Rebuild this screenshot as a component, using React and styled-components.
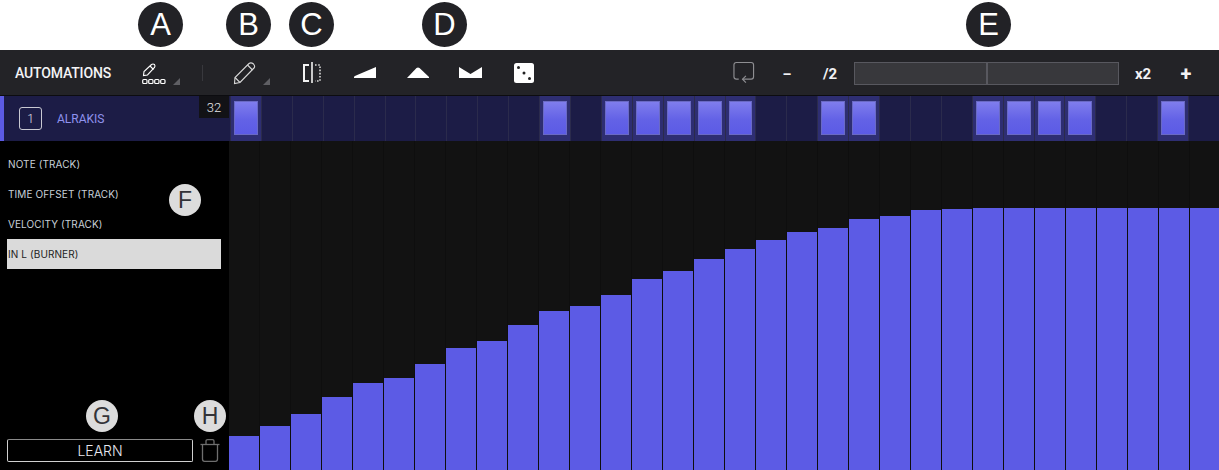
import styled, { createGlobalStyle } from 'styled-components';

const Global = createGlobalStyle`
  html, body { margin: 0; padding: 0; background: #000; }
  body { font-family: "Roboto", "Liberation Sans", sans-serif; overflow: hidden; }
`;

const LEVELS = [436, 426, 414, 397, 383, 378, 364, 348, 341, 325, 311, 306, 295, 279, 271, 259, 249, 240, 232, 228, 219, 216, 210, 209, 208, 208, 208, 208, 208, 208, 208, 208];
const ACTIVE = [0, 10, 12, 13, 14, 15, 16, 19, 20, 24, 25, 26, 27, 30];
const PARAMS = ['NOTE (TRACK)', 'TIME OFFSET (TRACK)', 'VELOCITY (TRACK)', 'IN L (BURNER)'];

const Page = styled.div`
  position: relative;
  width: 1219px;
  height: 470px;
  overflow: hidden;
  background: #000;
`;

const TopStrip = styled.div`
  height: 50px;
  background: #fff;
`;

const Badge = styled.div`
  position: absolute;
  left: ${p => p.$x}px;
  top: ${p => p.$y}px;
  width: ${p => p.$size}px;
  height: ${p => p.$size}px;
  border-radius: 50%;
  display: flex;
  align-items: center;
  justify-content: center;
  font-family: "Liberation Sans", sans-serif;
  font-size: ${p => p.$font}px;
  background: ${p => (p.$light ? '#dcdcdc' : '#222226')};
  color: ${p => (p.$light ? '#333338' : '#fff')};
`;

const Toolbar = styled.div`
  height: 45px;
  background: #232327;
  border-bottom: 1px solid #0c0c10;
  display: flex;
  align-items: center;
  color: #fff;
`;

const Title = styled.div`
  flex: none;
  width: 127px;
  padding-left: 15px;
  font-size: 14px;
  font-weight: 500;
  letter-spacing: -0.15px;
  color: #f4f4f6;
`;

const Tool = styled.div`
  flex: none;
  display: flex;
  align-items: ${p => (p.$center ? 'center' : 'flex-start')};
  margin-left: ${p => p.$gap || 0}px;
  width: ${p => p.$w}px;
  height: 33px;
  svg { display: block; }
`;

const CornerMark = styled.svg`
  margin-top: 22px;
`;

const Divider = styled.div`
  flex: none;
  width: 1px;
  height: 16px;
  margin-left: 22px;
  background: #38383d;
`;

const ZoomLabel = styled.div`
  flex: none;
  width: ${p => p.$w}px;
  margin-left: ${p => p.$gap || 0}px;
  margin-top: 2px;
  text-align: center;
  font-size: ${p => p.$size || 15}px;
  font-weight: 700;
  color: #f2f2f4;
`;

const Range = styled.div`
  flex: none;
  width: 265px;
  height: 23px;
  margin: 2px 0 0 9px;
  box-sizing: border-box;
  border: 1px solid #58585f;
  background: #38383c;
  display: flex;
  justify-content: center;
  &::after {
    content: '';
    width: 2px;
    background: #58585f;
  }
`;

const TrackRow = styled.div`
  height: 45px;
  display: flex;
  background: #1c1c46;
`;

const TrackHead = styled.div`
  position: relative;
  width: 229px;
  flex: none;
  box-sizing: border-box;
  border-left: 4px solid #5c5be5;
  display: flex;
  align-items: center;
  padding-left: 15px;
`;

const TrackNumber = styled.div`
  width: 23px;
  height: 23px;
  box-sizing: border-box;
  border: 1px solid #c9c9d2;
  border-radius: 3px;
  color: #e6e6ee;
  font-size: 12px;
  font-weight: 300;
  display: flex;
  align-items: center;
  justify-content: center;
`;

const TrackName = styled.div`
  margin-left: 15px;
  font-size: 12px;
  font-weight: 400;
  color: #8f92ee;
`;

const StepCount = styled.div`
  position: absolute;
  right: 0;
  top: 0;
  width: 30px;
  height: 22px;
  background: #121216;
  color: #e4e4e8;
  font-size: 13px;
  font-weight: 300;
  display: flex;
  align-items: center;
  justify-content: center;
`;

const Steps = styled.div`
  flex: 1;
  padding-left: 1px;
  display: grid;
  grid-template-columns: repeat(32, 1fr);
`;

const Step = styled.div`
  box-sizing: border-box;
  border-left: 1px solid #2b2b4c;
  background: ${p => (p.$on ? '#2e2e72' : 'transparent')};
  display: flex;
  padding: 5px 3px 6px 3px;
`;

const StepPad = styled.div`
  flex: 1;
  box-sizing: border-box;
  border: 1px solid #6a6ac4;
  background: linear-gradient(#7f7ded, #6362e6 55%, #5c5be5);
`;

const Main = styled.div`
  height: 329px;
  display: flex;
`;

const Sidebar = styled.div`
  width: 229px;
  flex: none;
  box-sizing: border-box;
  padding: 8px 8px 8px 7px;
  display: flex;
  flex-direction: column;
`;

const ParamRow = styled.div`
  height: 30px;
  line-height: 31px;
  font-family: "Inter", "Liberation Sans", sans-serif;
  font-size: 10px;
  letter-spacing: 0.1px;
  background: ${p => (p.$selected ? '#dadada' : 'transparent')};
  color: ${p => (p.$selected ? '#222' : '#c8d0d8')};
  padding-left: 1px;
`;

const LearnRow = styled.div`
  margin-top: auto;
  display: flex;
  align-items: center;
  gap: 7px;
`;

const LearnButton = styled.div`
  width: 186px;
  height: 23px;
  box-sizing: border-box;
  border: 1px solid #d0d0d0;
  border-top-color: #8a8a8a;
  border-radius: 2px;
  text-align: center;
  line-height: 21px;
  color: #e8e8f0;
  font-family: "Inter", "Liberation Sans", sans-serif;
  font-size: 14px;
  font-weight: 300;
`;

const Chart = styled.div`
  flex: 1;
  display: grid;
  grid-template-columns: repeat(32, 31px);
  background: #121212;
`;

const ChartColumn = styled.div`
  border-right: 1px solid #0e0e0e;
  display: flex;
  align-items: flex-end;
`;

const ChartBar = styled.div`
  flex: 1;
  background: #5c5be5;
`;

const EditGlyph = () => (
  <svg width="24" height="33" viewBox="0 0 24 33" fill="none" stroke="#fff" strokeWidth="1.1">
    <path d="M1.5 19.5 L2 15.5 L9.5 8.5 Q11 7.5 12.5 8.5 Q13.5 10 12.5 11.5 L5.5 19 Z" />
    <path d="M8 10 L11.5 13.5" />
    <rect x="0.7" y="23.5" width="4.3" height="4" rx="1" strokeWidth="1.2" />
    <rect x="6.7" y="23.5" width="4.3" height="4" rx="1" strokeWidth="1.2" />
    <rect x="12.7" y="23.5" width="4.3" height="4" rx="1" strokeWidth="1.2" />
    <rect x="18.7" y="23.5" width="4.3" height="4" rx="1" strokeWidth="1.2" />
  </svg>
);

const Corner = () => (
  <CornerMark width="7" height="7" viewBox="0 0 7 7">
    <path d="M7 0 V7 H0 Z" fill="#5f5f64" />
  </CornerMark>
);

const PencilGlyph = () => (
  <svg width="24" height="33" viewBox="0 0 24 33" fill="none" stroke="#d8d8d8" strokeWidth="1.1">
    <path d="M1.5 27.5 L2 21.5 L16 7.5 Q18 6 20.5 8 Q22.5 10.5 21 12 L7 26.5 Z" />
    <path d="M14.5 9 L19.5 14" />
    <path d="M2 21.5 L7 26.5" />
  </svg>
);

const SplitGlyph = () => (
  <svg width="18" height="21" viewBox="0 0 18 21" fill="none">
    <path d="M6 3 H1 V19 H6" stroke="#f2f2f2" strokeWidth="2" />
    <path d="M9 0 V21" stroke="#f2f2f2" strokeWidth="1.6" />
    <path d="M12 3 H17 V19 H12" stroke="#d8d8d8" strokeWidth="1.6" strokeDasharray="1.6 1.6" />
  </svg>
);

const ShapeGlyph = ({ d }) => (
  <svg width="23" height="11" viewBox="0 0 23 11">
    <path d={d} fill="#fff" />
  </svg>
);

const DiceGlyph = () => (
  <svg width="20" height="20" viewBox="0 0 20 20">
    <rect width="20" height="20" rx="2.5" fill="#fff" />
    <circle cx="4.5" cy="4.5" r="1.5" fill="#222" />
    <circle cx="10" cy="10" r="1.5" fill="#222" />
    <circle cx="15.5" cy="15.5" r="1.5" fill="#222" />
  </svg>
);

const LoopGlyph = () => (
  <svg width="22" height="23" viewBox="0 0 23 23" fill="none" stroke="#8e8e92" strokeWidth="1.2">
    <path d="M6 18.5 H3.5 Q1 18.5 1 16 V3.5 Q1 1 3.5 1 H19 Q21.5 1 21.5 3.5 V16 Q21.5 18.5 19 18.5 H10" />
    <path d="M13.5 15 L10 18.5 L13.5 22" />
  </svg>
);

const TrashGlyph = () => (
  <svg width="20" height="23" viewBox="0 0 20 23" fill="none" stroke="#6e6e6e" strokeWidth="1.3">
    <path d="M0.5 5.5 H19.5" />
    <path d="M6 5 V2 Q6 0.7 7.5 0.7 H12.5 Q14 0.7 14 2 V5" />
    <path d="M2.5 6 V20 Q2.5 22.3 4.5 22.3 H15.5 Q17.5 22.3 17.5 20 V6" />
  </svg>
);

const BADGES = [
  ['A', 138, 2], ['B', 226, 2], ['C', 289, 2], ['D', 422, 2], ['E', 966, 2],
];
const SMALL_BADGES = [['F', 169, 184], ['G', 86, 400], ['H', 194, 400]];

export default function App() {
  return (
    <Page>
      <Global />
      <TopStrip />
      <Toolbar>
        <Title>AUTOMATIONS</Title>
        <Tool $w={24}><EditGlyph /></Tool>
        <Tool $w={7} $gap={7}><Corner /></Tool>
        <Divider />
        <Tool $w={24} $gap={30}><PencilGlyph /></Tool>
        <Tool $w={7} $gap={6}><Corner /></Tool>
        <Tool $w={18} $gap={33} $center><SplitGlyph /></Tool>
        <Tool $w={23} $gap={33} $center><ShapeGlyph d="M0 10 Q0 9 2 8.5 L22 0 V11 H0 Z" /></Tool>
        <Tool $w={23} $gap={30} $center><ShapeGlyph d="M0 11 L9.5 1 Q11 0 12.5 1 L22 10 V11 Z" /></Tool>
        <Tool $w={23} $gap={29} $center><ShapeGlyph d="M0 0 L11.5 7 L23 0 V11 H0 Z" /></Tool>
        <Tool $w={20} $gap={32} $center><DiceGlyph /></Tool>
        <Tool $w={22} $gap={199} $center><LoopGlyph /></Tool>
        <ZoomLabel $w={20} $gap={22} $size={14}>–</ZoomLabel>
        <ZoomLabel $w={30} $gap={18}>/2</ZoomLabel>
        <Range />
        <ZoomLabel $w={30} $gap={9}>x2</ZoomLabel>
        <ZoomLabel $w={20} $gap={18} $size={20}>+</ZoomLabel>
      </Toolbar>
      <TrackRow>
        <TrackHead>
          <TrackNumber>1</TrackNumber>
          <TrackName>ALRAKIS</TrackName>
          <StepCount>32</StepCount>
        </TrackHead>
        <Steps>
          {LEVELS.map((_, i) => (
            <Step key={i} $on={ACTIVE.includes(i)}>
              {ACTIVE.includes(i) && <StepPad />}
            </Step>
          ))}
        </Steps>
      </TrackRow>
      <Main>
        <Sidebar>
          {PARAMS.map((name, i) => (
            <ParamRow key={name} $selected={i === 3}>{name}</ParamRow>
          ))}
          <LearnRow>
            <LearnButton>LEARN</LearnButton>
            <TrashGlyph />
          </LearnRow>
        </Sidebar>
        <Chart>
          {LEVELS.map((top, i) => (
            <ChartColumn key={i}>
              <ChartBar style={{ height: 470 - top }} />
            </ChartColumn>
          ))}
        </Chart>
      </Main>
      {BADGES.map(([label, x, y]) => (
        <Badge key={label} $x={x} $y={y} $size={45} $font={31}>{label}</Badge>
      ))}
      {SMALL_BADGES.map(([label, x, y]) => (
        <Badge key={label} $light $x={x} $y={y} $size={32} $font={23}>{label}</Badge>
      ))}
    </Page>
  );
}
